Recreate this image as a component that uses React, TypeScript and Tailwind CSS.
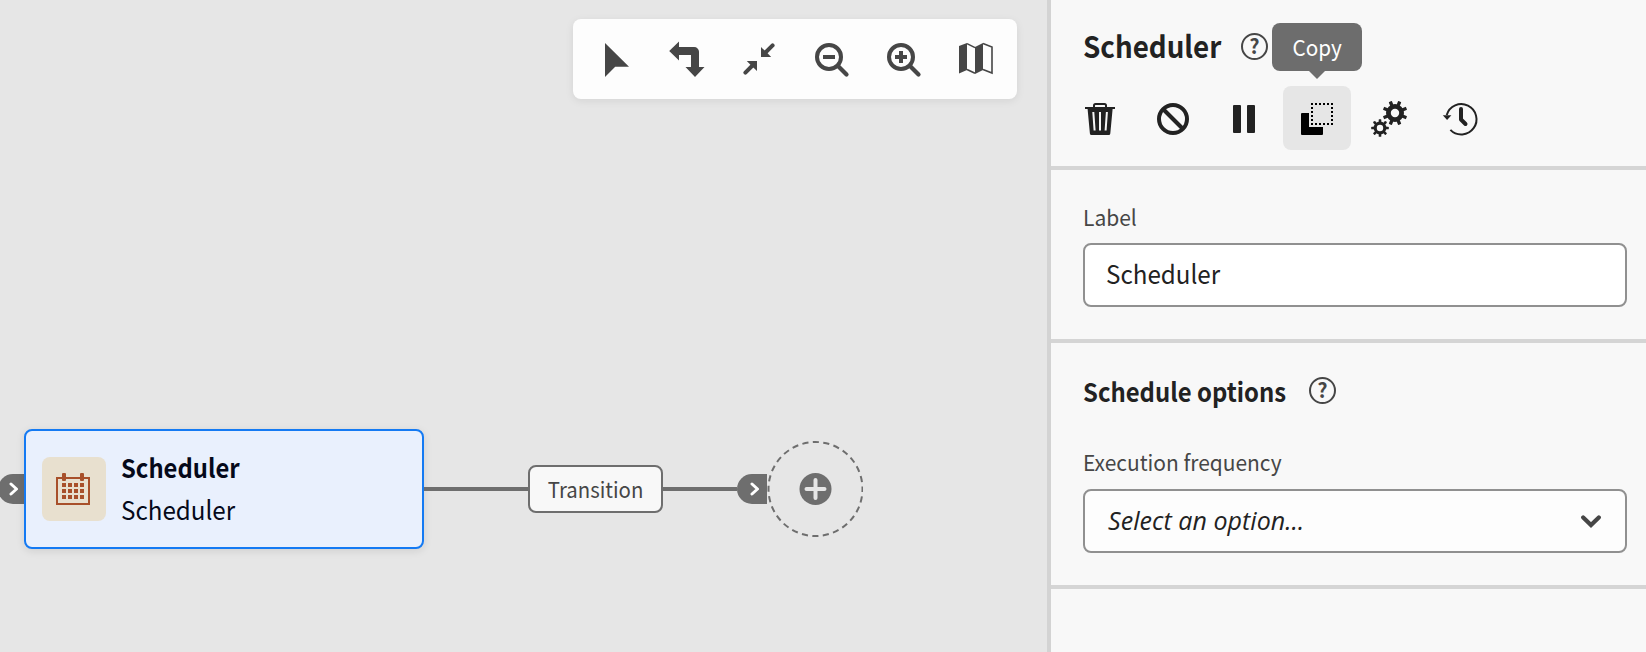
import React from "react";

const FONT = "font-['Noto_Sans_CJK_SC',sans-serif]";

function Icon({ children, className = "" }: { children: React.ReactNode; className?: string }) {
  return (
    <svg width="36" height="36" viewBox="0 0 36 36" className={`block shrink-0 overflow-visible ${className}`} fill="currentColor">
      {children}
    </svg>
  );
}

function Pointer() {
  return (
    <Icon>
      <path d="M7 2v34l10.2-10.2H31z" />
    </Icon>
  );
}

function TurnArrows() {
  return (
    <Icon>
      <path d="M-.8 10 9 .5V6h15.2A4.8 4.8 0 0 1 29 10.800V26h5.500L25 36l-9.500-10H21V14H9v5.500z" />
    </Icon>
  );
}

function Collapse() {
  return (
    <Icon>
      <path d="M19 6v10h10.200l-3.400-3.400L19 6zM15 30V20H4.800l3.400 3.400z" />
      <path d="M23.500 11.500L30.600 4.400M10.500 24.500L3.400 31.600" stroke="currentColor" strokeWidth="4" strokeLinecap="round" />
    </Icon>
  );
}

function Zoom({ plus = false }: { plus?: boolean }) {
  return (
    <Icon>
      <circle cx="15" cy="16" r="12" fill="none" stroke="currentColor" strokeWidth="4" />
      <path d="M24 25l8.500 8.500" stroke="currentColor" strokeWidth="4.200" strokeLinecap="round" />
      <path d="M9 14h12v4H9z" />
      {plus && <path d="M13 10h4v12h-4z" />}
    </Icon>
  );
}

function MapIcon() {
  return (
    <Icon>
      <path d="M1 5l8-3v27l-8 3.500zM17 6l8-4v27l-8 4z" />
      <path d="M9 2.600l8 4M9 28.500l8 3.800M25 2.600l9 3.500V32l-9-3.500" fill="none" stroke="currentColor" strokeWidth="1.600" />
    </Icon>
  );
}

function Trash() {
  return (
    <Icon className="mt-[2px]">
      <path d="M2 6h30v2H2z" />
      <path d="M11 6.500V4.500a1.500 1.500 0 0 1 1.500-1.500h9A1.500 1.500 0 0 1 23 4.500v2" fill="none" stroke="currentColor" strokeWidth="2" />
      <path
        fillRule="evenodd"
        d="M4.500 7h25.200L27.300 32.500A1.600 1.600 0 0 1 25.700 34H8.500A1.600 1.600 0 0 1 6.900 32.500zM9.300 11l1.300 18.500h2L11.300 11zM16 11v18.500h2V11zM22.900 11l-1.300 18.500h2L24.900 11z"
      />
    </Icon>
  );
}

function Ban() {
  return (
    <Icon className="mt-[2px]">
      <circle cx="18" cy="18" r="14" fill="none" stroke="currentColor" strokeWidth="4" />
      <path d="M8.500 8.500l19 19" stroke="currentColor" strokeWidth="4" />
    </Icon>
  );
}

function Pause() {
  return (
    <Icon className="mt-[2px]">
      <rect x="6" y="4" width="8" height="28" rx="1" />
      <rect x="20" y="4" width="8" height="28" rx="1" />
    </Icon>
  );
}

function CopyIcon() {
  const steps = [0, 1, 2, 3, 4, 5];
  return (
    <Icon className="mt-[2px] text-black">
      <path d="M3 12h7v14h14v7a1 1 0 0 1-1 1H3a1 1 0 0 1-1-1V13a1 1 0 0 1 1-1z" />
      {steps.map((i) => (
        <g key={i}>
          <rect x={12 + i * 4} y="2" width="2" height="2" />
          <rect x={12 + i * 4} y="22" width="2" height="2" />
          <rect x="12" y={2 + i * 4} width="2" height="2" />
          <rect x="32" y={2 + i * 4} width="2" height="2" />
        </g>
      ))}
    </Icon>
  );
}

function Gear({ x, y, outer, ring, ringWidth, tooth, turn }: { x: number; y: number; outer: number; ring: number; ringWidth: number; tooth: number; turn: number }) {
  return (
    <g transform={`translate(${x} ${y})`}>
      <circle r={ring} fill="none" stroke="currentColor" strokeWidth={ringWidth} />
      {[0, 1, 2, 3, 4, 5, 6, 7].map((i) => (
        <rect key={i} x={-tooth / 2} y={-outer} width={tooth} height={outer - ring} rx="0.6" transform={`rotate(${turn + i * 45})`} />
      ))}
    </g>
  );
}

function Gears() {
  return (
    <Icon className="mt-[2px]">
      <Gear x={24} y={12} outer={12.4} ring={6.6} ringWidth={4.8} tooth={3.4} turn={22.5} />
      <Gear x={9} y={27} outer={8.8} ring={4.8} ringWidth={3.2} tooth={2.6} turn={0} />
    </Icon>
  );
}

function History() {
  return (
    <Icon className="mt-[2px]">
      <path d="M3.700 14A15.200 15.200 0 1 1 7.400 28.900" fill="none" stroke="currentColor" strokeWidth="2" />
      <path d="M-.2 14.200h8.600L4.100 19z" />
      <path d="M18 8v10.500l4.500 4.500" fill="none" stroke="currentColor" strokeWidth="4" strokeLinecap="round" strokeLinejoin="round" />
    </Icon>
  );
}

function Help() {
  return (
    <span className="mb-[2px] flex h-[27px] w-[27px] shrink-0 items-center justify-center rounded-full border-[2.5px] border-[#464646] text-[20px] leading-none font-bold text-[#464646]">
      <span className="block h-[20px] leading-[19px]">?</span>
    </span>
  );
}

function Chevron() {
  return (
    <svg width="10" height="14" viewBox="0 0 10 14" className="block">
      <path d="M2 2l5.500 5L2 12" fill="none" stroke="#fff" strokeWidth="3" strokeLinecap="round" strokeLinejoin="round" />
    </svg>
  );
}

function Calendar() {
  return (
    <svg width="34" height="34" viewBox="0 0 34 34" className="mr-[2px] block text-[#a8502a]" fill="currentColor">
      <rect x="1" y="6" width="32" height="26" fill="none" stroke="currentColor" strokeWidth="2" />
      <rect x="6" y="1" width="4" height="8" rx="1" />
      <rect x="24" y="1" width="4" height="8" rx="1" />
      {[0, 1, 2].map((r) => [0, 1, 2, 3].map((c) => <rect key={`${r}-${c}`} x={6 + c * 6} y={11 + r * 6} width="4" height="4" />))}
    </svg>
  );
}

function Canvas() {
  return (
    <main className="relative h-full w-[1047px] shrink-0 overflow-hidden bg-[#e6e6e6] pt-[429px]">
      <div className="absolute top-[19px] left-[573px] flex h-[80px] w-[444px] items-center gap-9 rounded-lg bg-[#fdfdfd] pl-[25px] text-[#464646] shadow-[0_2px_8px_rgba(0,0,0,0.08)]">
        <Pointer />
        <TurnArrows />
        <Collapse />
        <Zoom />
        <Zoom plus />
        <MapIcon />
      </div>
      <div className="flex h-[120px] items-center">
        <div className="-ml-[2px] flex h-[30px] w-[26px] items-center rounded-l-full bg-[#6e6e6e] pl-[11px]">
          <Chevron />
        </div>
        <div className="flex h-[120px] w-[400px] items-center rounded-lg border-2 border-[#147af3] bg-[#e9f0fd] pl-4 shadow-[0_2px_8px_rgba(0,0,0,0.1)]">
          <div className="flex h-[64px] w-[64px] items-center justify-center rounded-lg bg-[#e8e0cf]">
            <Calendar />
          </div>
          <div className="mb-[2px] ml-[15px] text-[26px] leading-[42px] text-[#05091a]">
            <div className="origin-left scale-x-[0.915] font-bold">Scheduler</div>
            <div className="origin-left scale-x-[0.93]">Scheduler</div>
          </div>
        </div>
        <div className="h-1 w-[104px] bg-[#6e6e6e]" />
        <div className="flex h-[48px] w-[135px] items-center justify-center rounded-lg border-2 border-[#6e6e6e] bg-[#f8f8f8] text-[22px] leading-[44px] text-[#464646]">
          <span className="mb-[2px] scale-x-[0.925]">Transition</span>
        </div>
        <div className="h-1 w-[74px] bg-[#6e6e6e]" />
        <div className="flex h-[30px] w-[30px] items-center rounded-l-full bg-[#6e6e6e] pl-[13px]">
          <Chevron />
        </div>
        <svg width="96" height="96" viewBox="0 0 96 96" className="block">
          <circle cx="48.500" cy="48" r="47" fill="none" stroke="#6e6e6e" strokeWidth="2" strokeDasharray="6.200 4.347" strokeDashoffset="3.100" />
          <circle cx="48.500" cy="48" r="16" fill="#6e6e6e" />
          <path d="M48.500 39v18M39.500 48h18" stroke="#e6e6e6" strokeWidth="4" strokeLinecap="round" />
        </svg>
      </div>
    </main>
  );
}

function Panel() {
  return (
    <aside className="h-full flex-1 border-l-4 border-[#d3d3d3] bg-[#f8f8f8] text-[#222]">
      <header className="h-[170px] border-b-4 border-[#d5d5d5] pt-[24px] pl-8">
        <div className="flex h-[46px] items-center">
          <h1 className="mb-1 w-[158px] origin-left scale-x-[0.925] text-[30px] leading-[46px] font-bold">Scheduler</h1>
          <Help />
        </div>
        <div className="mt-4 flex h-[64px] items-center gap-9">
          <Trash />
          <Ban />
          <Pause />
          <div className="relative -mx-4 flex h-[64px] w-[68px] items-center justify-center rounded-lg bg-[#e6e6e6]">
            <CopyIcon />
            <div className="absolute -top-[63px] -left-[11px] flex h-[48px] w-[90px] items-center justify-center rounded-lg bg-[#6d6d6d] text-[22px] text-white">
              <span className="mb-[2px] scale-x-[0.94]">Copy</span>
              <svg width="18" height="9" viewBox="0 0 18 9" className="absolute top-[47px] left-[36px]">
                <path d="M0 0h18L9 9z" fill="#6d6d6d" />
              </svg>
            </div>
          </div>
          <Gears />
          <History />
        </div>
      </header>
      <section className="h-[173px] border-b-4 border-[#d5d5d5] pt-[30px] pr-[19px] pl-8">
        <div className="h-[43px] origin-left scale-x-[0.955] text-[22px] leading-[32px] text-[#464646]">Label</div>
        <div className="h-[64px] rounded-lg border-2 border-[#909090] bg-white pl-[21px] text-[26px] leading-[56px]">
          <div className="origin-left scale-x-[0.93]">Scheduler</div>
        </div>
      </section>
      <section className="h-[246px] border-b-4 border-[#d5d5d5] pt-[28px] pr-[19px] pl-8">
        <div className="flex h-[40px] items-center">
          <h2 className="w-[226px] origin-left scale-x-[0.918] text-[26px] leading-[40px] font-bold whitespace-nowrap">Schedule options</h2>
          <Help />
        </div>
        <div className="mt-[34px] h-[44px] origin-left scale-x-[0.952] text-[22px] leading-[32px] text-[#464646]">Execution frequency</div>
        <div className="flex h-[64px] items-center justify-between rounded-lg border-2 border-[#909090] bg-[#fdfdfd] pr-6 pl-[23px]">
          <span className="font-['Open_Sans',sans-serif] text-[25px] tracking-[0.05px] italic">Select an option…</span>
          <svg width="20" height="13" viewBox="0 0 20 13" className="block">
            <path d="M2.200 2.500l7.800 7.500 7.800-7.500" fill="none" stroke="#464646" strokeWidth="4.200" strokeLinecap="round" />
          </svg>
        </div>
      </section>
    </aside>
  );
}

export default function App() {
  return (
    <div className={`flex h-[652px] w-[1646px] overflow-hidden ${FONT}`}>
      <Canvas />
      <Panel />
    </div>
  );
}
